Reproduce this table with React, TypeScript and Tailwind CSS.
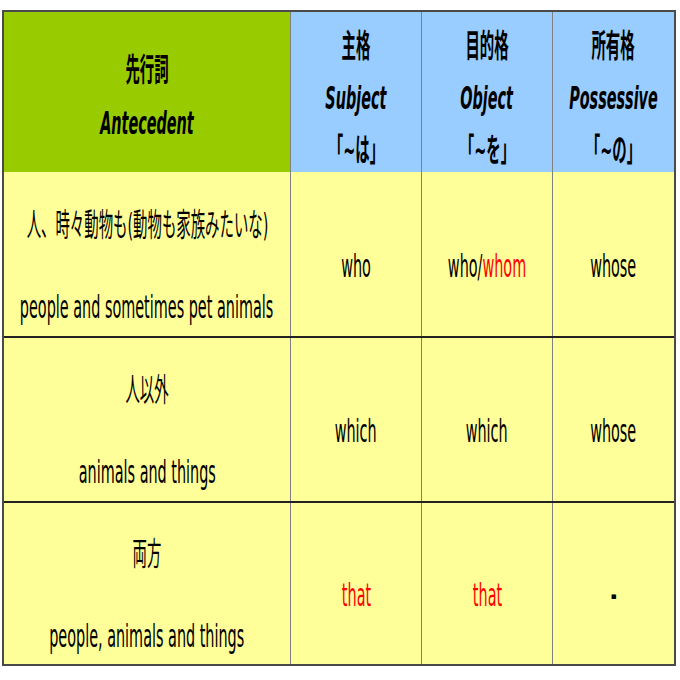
import React from "react";

const S = "inline-block whitespace-nowrap scale-x-[0.45]";

function T({ children, className = "" }: { children: React.ReactNode; className?: string }) {
  return <span className={`${S} ${className}`}>{children}</span>;
}

const cols = "grid grid-cols-[287px_131px_131px_121px]";
const vline = "border-r border-[#808080]";

function HeadCell({ jp, en, mark, last }: { jp: string; en: string; mark: string; last?: boolean }) {
  return (
    <div className={`bg-[#99ccff] ${last ? "" : vline} flex flex-col items-center justify-center pt-[8px] font-bold leading-[52px]`}>
      <T>{jp}</T>
      <T className="italic">{en}</T>
      <T>{mark}</T>
    </div>
  );
}

function LeftCell({ jp, en }: { jp: string; en: string }) {
  return (
    <div className={`bg-[#ffff99] ${vline} flex flex-col items-center justify-center pt-[24px] leading-[41px]`}>
      <T>{jp}</T>
      <div className="h-[41px]" />
      <T>{en}</T>
    </div>
  );
}

function Cell({ children, last }: { children: React.ReactNode; last?: boolean }) {
  return (
    <div className={`bg-[#ffff99] ${last ? "" : vline} flex items-center justify-center pt-[24px] leading-[41px]`}>
      {children}
    </div>
  );
}

export default function App() {
  return (
    <div className="w-[680px] h-[680px] bg-white pt-[10px] pl-[2px] text-black text-[32px] font-['DejaVu_Sans','Noto_Sans_CJK_JP',sans-serif] overflow-hidden">
      <div className="w-[674px] border-2 border-[#4a4a4a] overflow-hidden">
        <div className={`${cols} h-[158px]`}>
          <div className={`bg-[#99cc00] ${vline} flex flex-col items-center justify-center pt-[5px] font-bold leading-[53px]`}>
            <T>先行詞</T>
            <T className="italic">Antecedent</T>
          </div>
          <HeadCell jp="主格" en="Subject" mark="「~は」" />
          <HeadCell jp="目的格" en="Object" mark="「~を」" />
          <HeadCell jp="所有格" en="Possessive" mark="「~の」" last />
        </div>
        <div className={`${cols} h-[166px] border-t-2 border-[#222]`}>
          <LeftCell jp="人、時々動物も(動物も家族みたいな)" en="people and sometimes pet animals" />
          <Cell><T>who</T></Cell>
          <Cell>
            <T>
              who/<span className="text-[#ff0000]">whom</span>
            </T>
          </Cell>
          <Cell last><T>whose</T></Cell>
        </div>
        <div className={`${cols} h-[165px] border-t-2 border-[#222]`}>
          <LeftCell jp="人以外" en="animals and things" />
          <Cell><T>which</T></Cell>
          <Cell><T>which</T></Cell>
          <Cell last><T>whose</T></Cell>
        </div>
        <div className={`${cols} h-[163px] border-t-2 border-[#222]`}>
          <LeftCell jp="両方" en="people, animals and things" />
          <Cell><T className="text-[#ff0000]">that</T></Cell>
          <Cell><T className="text-[#ff0000]">that</T></Cell>
          <Cell last><T className="font-bold">-</T></Cell>
        </div>
      </div>
    </div>
  );
}
